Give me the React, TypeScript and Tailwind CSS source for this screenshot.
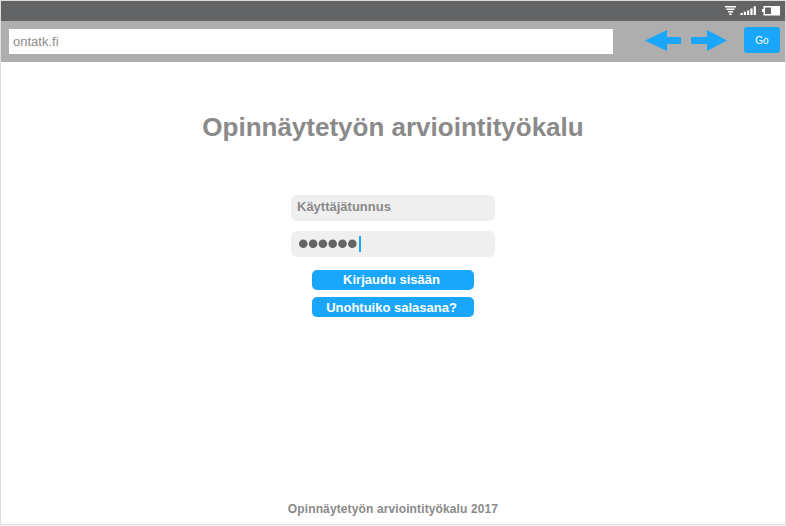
import React from "react";

function StatusBar() {
  return (
    <div className="h-5 bg-[#636466]">
      <svg className="ml-auto block h-5 w-[65px]" viewBox="0 0 65 20" fill="#fff">
        <path d="M5 5h11v1.4H5zM6.5 7.6h8v1.4h-8zM8 10h5v1.6H8zM9.3 12.4h2.4V14H9.3z" />
        <path d="M20.5 12h2.2v2h-2.2zM23.8 10.8H26V14h-2.2zM27.1 9.4h2.2V14h-2.2zM30.4 7.4h2.2V14h-2.2zM33.7 5.2h2.2V14h-2.2z" />
        <path fillRule="evenodd" d="M43.5 5H60v9.5H43.5V11H42V8h1.5zM45 6.5v6.4h6V6.5z" />
      </svg>
    </div>
  );
}

function AddressBar() {
  return (
    <div className="flex h-[41px] items-start bg-[#aeaeae] pl-2">
      <div className="mt-[8px] h-[25px] w-[604px] bg-white pl-1 text-[13px] leading-[25px] text-[#8c8c8c]">
        ontatk.fi
      </div>
      <svg className="mt-[9px] ml-8 block h-[22px] w-[84px]" viewBox="0 0 84 22" fill="#1aa7fb">
        <path d="M0 10.5 22 0v7h14v7H22v7z" />
        <path d="M82 10.5 62 0v7H46v7h16v7z" />
      </svg>
      <button className="mt-[6px] ml-[15px] h-[26px] w-9 rounded-[3px] bg-[#1aa7fb] text-[10px] leading-[27px] text-white">
        Go
      </button>
    </div>
  );
}

export default function App() {
  return (
    <div className="h-[526px] w-[786px] bg-[#f7f7f7] font-['Liberation_Sans',Arial,sans-serif]">
      <div className="flex h-[525px] w-[786px] flex-col border border-[#dedede] bg-white">
        <StatusBar />
        <AddressBar />
        <main className="flex flex-1 flex-col items-center">
          <h1 className="mt-[49px] h-8 text-[26px] leading-8 font-bold whitespace-nowrap text-[#8a8a8a]">
            Opinnäytetyön arviointityökalu
          </h1>
          <div className="mt-[52px] h-[26px] w-[204px] rounded-[6px] bg-[#efefef] pl-[6px] text-[13px] leading-[24px] font-bold text-[#8a8a8a]">
            Käyttäjätunnus
          </div>
          <div className="mt-[10px] flex h-[26px] w-[204px] items-center rounded-[6px] bg-[#efefef] pl-2">
            <svg className="h-[10px] w-[60px]" viewBox="0 0 60 10" fill="#636466">
              {[0, 1, 2, 3, 4, 5].map((dot) => (
                <circle key={dot} cx={4.3 + dot * 9.8} cy={4.8} r={4.3} />
              ))}
            </svg>
            <span className="h-4 w-[2px] bg-[#1aa7fb]" />
          </div>
          <button className="mt-[13px] h-5 w-[162px] rounded-[5px] bg-[#1aa7fb] pr-[3px] text-[13px] leading-5 font-bold text-white">
            Kirjaudu sisään
          </button>
          <button className="mt-[7px] h-5 w-[162px] rounded-[5px] bg-[#1aa7fb] pr-[3px] text-[13px] leading-[22px] font-bold text-white">
            Unohtuiko salasana?
          </button>
          <footer className="mt-auto mb-[7px] h-4 text-[12px] leading-4 font-bold tracking-[0.12px] whitespace-nowrap text-[#8a8a8a]">
            Opinnäytetyön arviointityökalu 2017
          </footer>
        </main>
      </div>
    </div>
  );
}
